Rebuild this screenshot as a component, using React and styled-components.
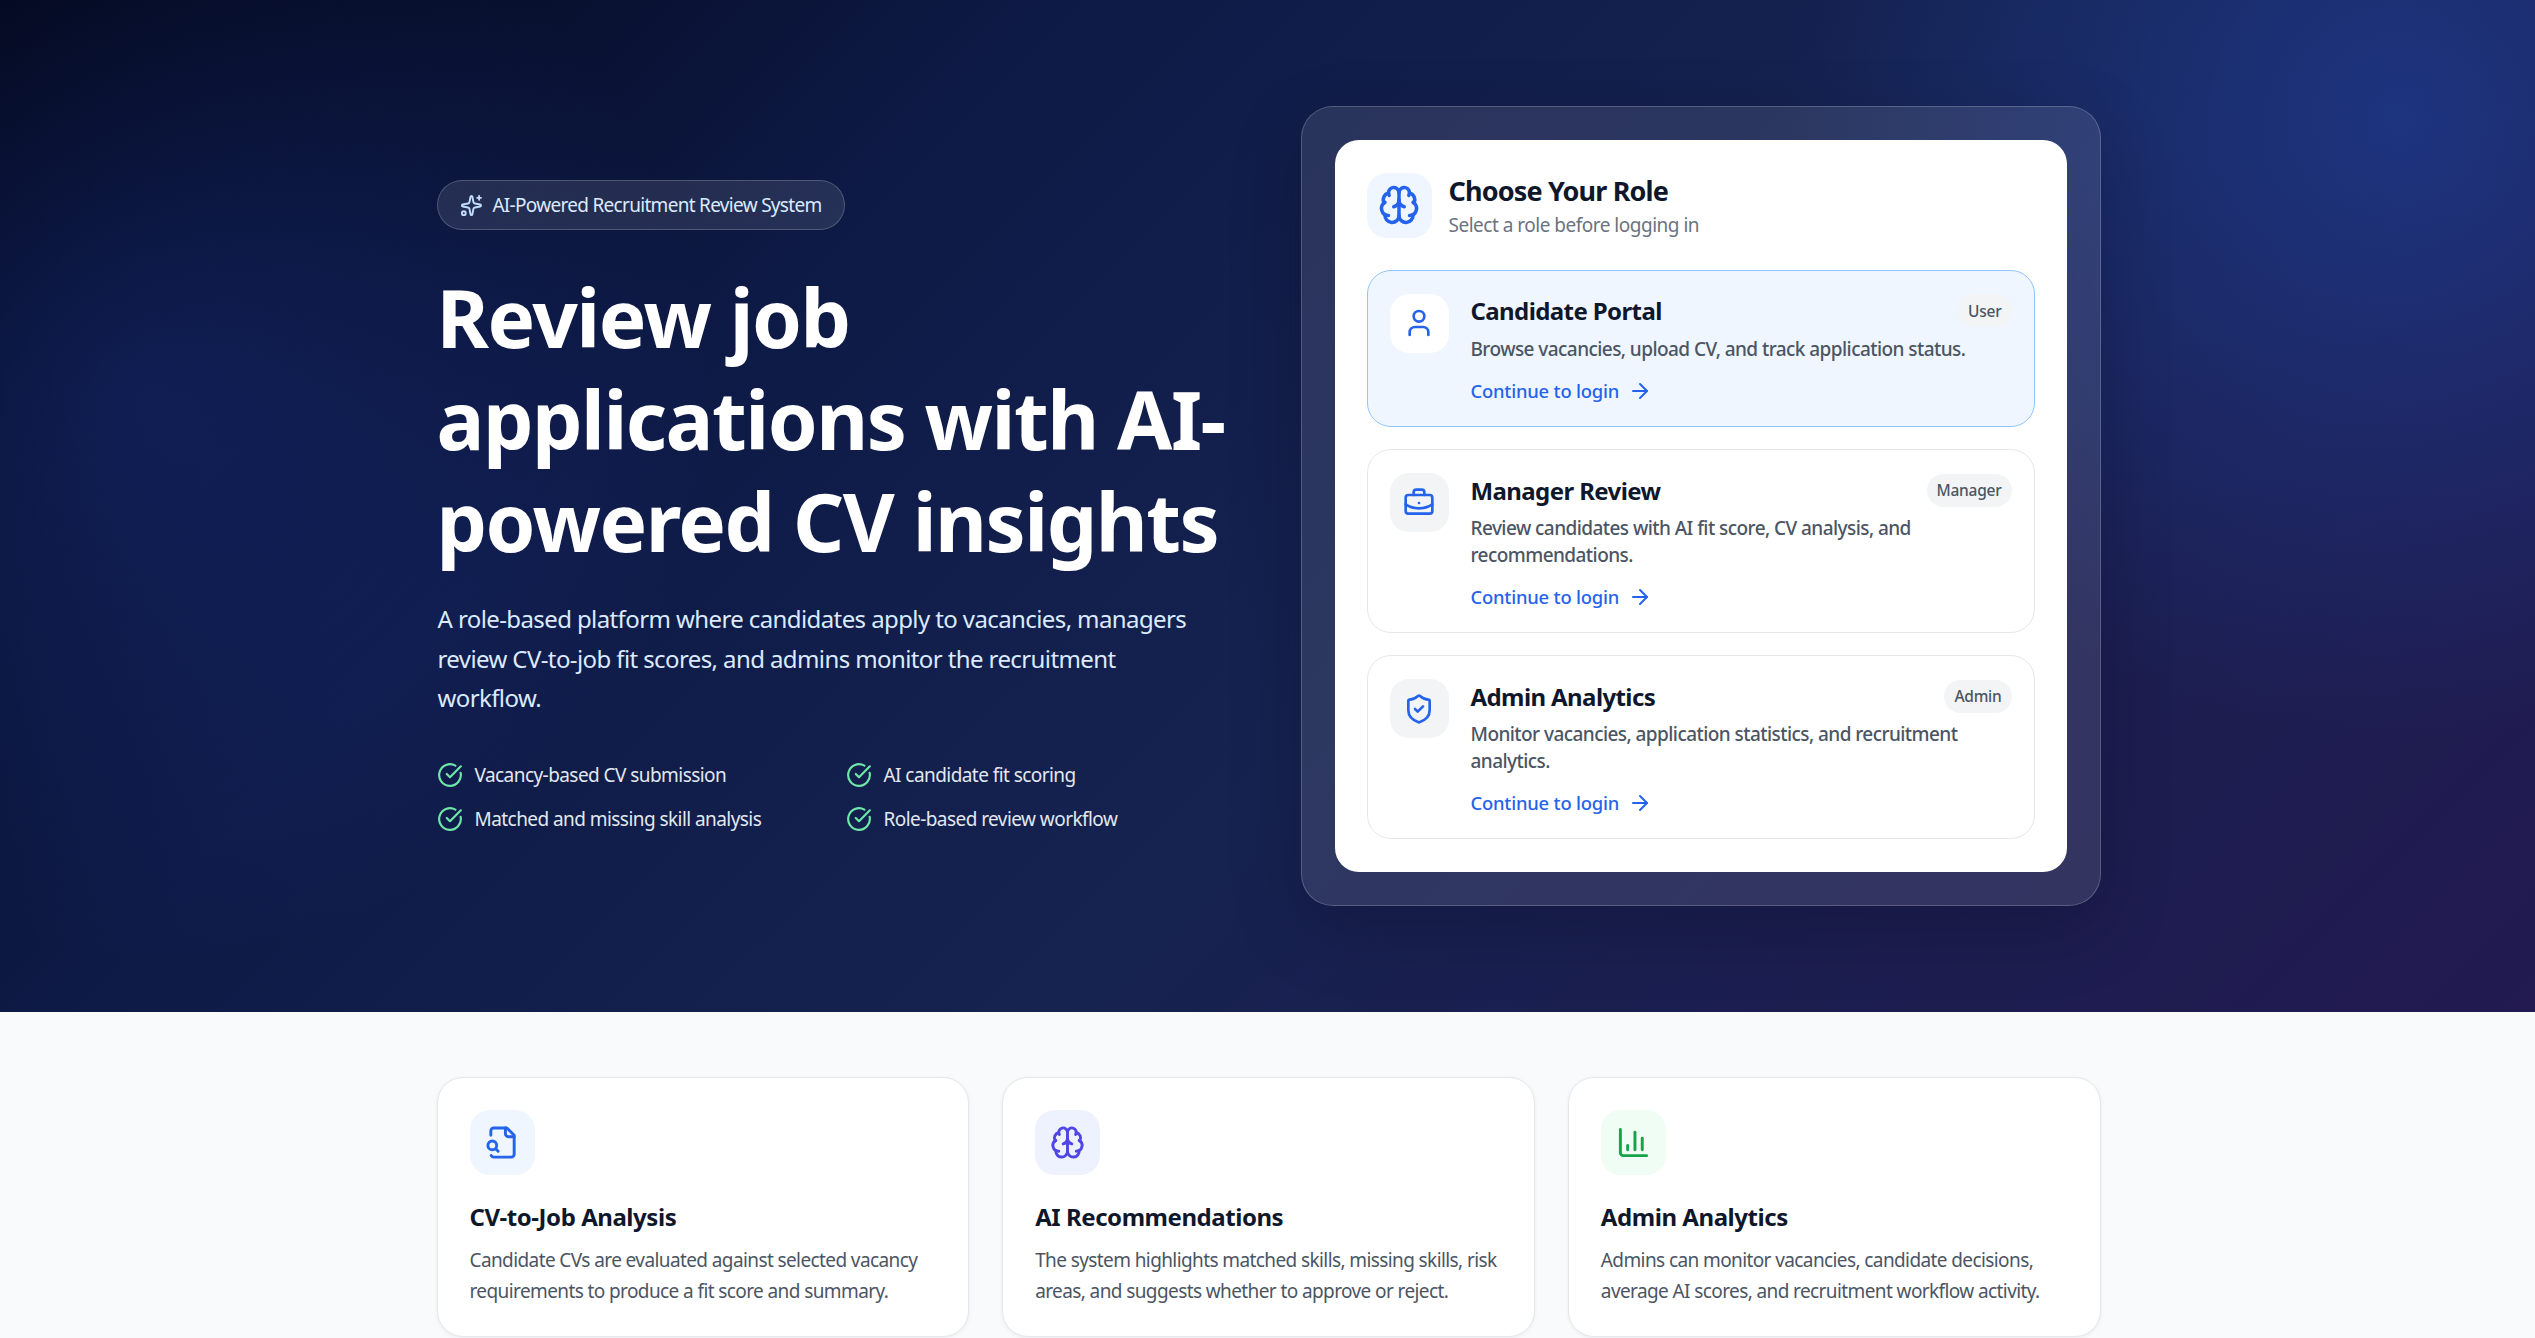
import React from 'react'
import styled, { createGlobalStyle } from 'styled-components'
import {
  ArrowRight,
  Brain,
  BriefcaseBusiness,
  ChartColumn,
  CircleCheckBig,
  ShieldCheck,
  Sparkles,
  User,
} from 'lucide-react'

const GlobalStyle = createGlobalStyle`
  html, body {
    margin: 0;
    height: 100%;
    overflow: hidden;
    background: #f8fafc;
    font-family: "Noto Sans", "Open Sans", sans-serif;
  }
  * { box-sizing: border-box; }
`

const Hero = styled.section`
  height: 1012px;
  display: flex;
  align-items: center;
  justify-content: center;
  padding-left: 2px;
  background:
    radial-gradient(circle at 2400px 120px, rgba(37, 99, 235, 0.3), transparent 620px),
    radial-gradient(circle at 150px 400px, rgba(37, 70, 190, 0.26), transparent 560px),
    linear-gradient(135deg, #020617 0%, #0e1a46 30%, #162250 58%, #221a50 100%);
`

const HeroGrid = styled.div`
  width: 1664px;
  display: grid;
  grid-template-columns: 800px 800px;
  column-gap: 64px;
  align-items: center;
`

const Intro = styled.div`
  display: flex;
  flex-direction: column;
  align-items: flex-start;
`

const Pill = styled.div`
  height: 50px;
  width: 408px;
  display: flex;
  align-items: center;
  gap: 10px;
  padding: 0 22px;
  border: 1px solid rgba(255, 255, 255, 0.2);
  border-radius: 25px;
  background: rgba(255, 255, 255, 0.1);
  color: #dbeafe;
  font-size: 19px;
  letter-spacing: -0.7px;
  white-space: nowrap;
`

const Headline = styled.h1`
  margin: 36px 0 0;
  color: #fff;
  font-size: 80px;
  line-height: 102px;
  font-weight: 700;
  letter-spacing: -1.5px;
`

const Lead = styled.p`
  margin: 27px 0 0 1px;
  width: 770px;
  color: #dbeafe;
  font-size: 24px;
  line-height: 39.5px;
  letter-spacing: -0.6px;
`

const Bullets = styled.ul`
  list-style: none;
  margin: 44px 0 0;
  padding: 0;
  display: grid;
  grid-template-columns: 409px 391px;
  row-gap: 18px;
`

const Bullet = styled.li`
  height: 26px;
  display: flex;
  align-items: center;
  gap: 12px;
  color: #e2e8f0;
  font-size: 19px;
  letter-spacing: -0.56px;
  white-space: nowrap;
  svg { color: #6ee7a8; }
`

const Panel = styled.div`
  padding: 33px;
  border: 1px solid rgba(255, 255, 255, 0.2);
  border-radius: 32px;
  background: rgba(255, 255, 255, 0.1);
  box-shadow: 0 24px 70px rgba(2, 6, 23, 0.22);
`

const RoleCard = styled.div`
  padding: 33px 32px;
  border-radius: 24px;
  background: #fff;
`

const RoleHeader = styled.div`
  display: flex;
  align-items: center;
  gap: 17px;
  margin-bottom: 32px;
`

const IconTile = styled.div`
  flex: none;
  width: ${p => p.$size}px;
  height: ${p => p.$size}px;
  display: flex;
  align-items: center;
  justify-content: center;
  border-radius: ${p => p.$radius}px;
  background: ${p => p.$bg};
  color: ${p => p.$fg};
`

const RoleHeading = styled.h2`
  margin: 2px 0 0;
  color: #0f172a;
  font-size: 27px;
  line-height: 31px;
  font-weight: 700;
  letter-spacing: -0.85px;
`

const RoleHint = styled.p`
  margin: 6px 0 0;
  color: #6b7280;
  font-size: 19px;
  line-height: 26px;
  letter-spacing: -0.5px;
`

const RoleList = styled.div`
  display: flex;
  flex-direction: column;
  gap: 22px;
`

const RoleRow = styled.div`
  display: flex;
  gap: 22px;
  padding: 23px 22px 21px;
  border: 1px solid ${p => (p.$active ? '#93c5fd' : '#e5e7eb')};
  border-radius: 24px;
  background: ${p => (p.$active ? '#eff6ff' : '#fff')};
`

const RoleBody = styled.div`
  flex: 1;
  min-width: 0;
`

const RoleTop = styled.div`
  display: flex;
  align-items: center;
  justify-content: space-between;
  height: 34px;
`

const RoleName = styled.h3`
  margin: 0;
  color: #0f172a;
  font-size: 24px;
  line-height: 33px;
  font-weight: 700;
  letter-spacing: -0.6px;
`

const Tag = styled.span`
  height: 33px;
  display: flex;
  align-items: center;
  padding: 0 10px;
  border-radius: 17px;
  background: #f3f4f6;
  color: #4b5563;
  font-size: 15.5px;
  font-weight: 500;
  letter-spacing: -0.25px;
`

const RoleText = styled.p`
  margin: 8px 0 0;
  color: #4b5563;
  font-size: 19px;
  line-height: 26.5px;
  font-weight: 500;
  letter-spacing: -0.56px;
`

const RoleLink = styled.div`
  display: flex;
  align-items: center;
  gap: 9px;
  margin-top: 15px;
  color: #2563eb;
  font-size: 18.4px;
  line-height: 28px;
  font-weight: 500;
  letter-spacing: -0.2px;
`

const Features = styled.section`
  display: flex;
  justify-content: center;
  padding: 65px 0 0 2px;
`

const FeatureGrid = styled.div`
  width: 1664px;
  display: grid;
  grid-template-columns: repeat(3, 1fr);
  gap: 33px;
`

const FeatureCard = styled.article`
  height: 260px;
  padding: 32px;
  border: 1px solid #e5e7eb;
  border-radius: 26px;
  background: #fff;
  box-shadow: 0 1px 4px rgba(15, 23, 42, 0.06);
`

const FeatureName = styled.h3`
  margin: 26px 0 0;
  color: #0f172a;
  font-size: 24px;
  line-height: 32px;
  font-weight: 700;
  letter-spacing: -0.45px;
`

const FeatureText = styled.p`
  margin: 12px 0 0;
  color: #4b5563;
  font-size: 19px;
  line-height: 31px;
  letter-spacing: -0.6px;
`

// file with the magnifier sitting on its lower left corner
const FileSearchIcon = ({ size }) => (
  <svg
    width={size}
    height={size}
    viewBox="0 0 24 24"
    fill="none"
    stroke="currentColor"
    strokeWidth="2"
    strokeLinecap="round"
    strokeLinejoin="round"
  >
    <path d="M14 2v4a2 2 0 0 0 2 2h4" />
    <path d="M4.268 21a2 2 0 0 0 1.727 1H18a2 2 0 0 0 2-2V7l-5-5H6a2 2 0 0 0-2 2v3" />
    <path d="m9 18-1.5-1.5" />
    <circle cx="5" cy="14" r="3" />
  </svg>
)

const bullets = [
  'Vacancy-based CV submission',
  'AI candidate fit scoring',
  'Matched and missing skill analysis',
  'Role-based review workflow',
]

const roles = [
  {
    name: 'Candidate Portal',
    tag: 'User',
    text: 'Browse vacancies, upload CV, and track application status.',
    icon: User,
    active: true,
  },
  {
    name: 'Manager Review',
    tag: 'Manager',
    text: 'Review candidates with AI fit score, CV analysis, and recommendations.',
    icon: BriefcaseBusiness,
  },
  {
    name: 'Admin Analytics',
    tag: 'Admin',
    text: 'Monitor vacancies, application statistics, and recruitment analytics.',
    icon: ShieldCheck,
  },
]

const features = [
  {
    name: 'CV-to-Job Analysis',
    text: 'Candidate CVs are evaluated against selected vacancy requirements to produce a fit score and summary.',
    icon: FileSearchIcon,
    bg: '#eff6ff',
    fg: '#2563eb',
  },
  {
    name: 'AI Recommendations',
    text: 'The system highlights matched skills, missing skills, risk areas, and suggests whether to approve or reject.',
    icon: Brain,
    bg: '#eef2ff',
    fg: '#4f46e5',
  },
  {
    name: 'Admin Analytics',
    text: 'Admins can monitor vacancies, candidate decisions, average AI scores, and recruitment workflow activity.',
    icon: ChartColumn,
    bg: '#f0fdf4',
    fg: '#16a34a',
  },
]

const App = () => (
  <>
    <GlobalStyle />
    <Hero>
      <HeroGrid>
        <Intro>
          <Pill>
            <Sparkles size={23} color="#bfdbfe" />
            AI-Powered Recruitment Review System
          </Pill>
          <Headline>
            Review job applications with AI-powered CV insights
          </Headline>
          <Lead>
            A role-based platform where candidates apply to vacancies, managers review CV-to-job fit
            scores, and admins monitor the recruitment workflow.
          </Lead>
          <Bullets>
            {bullets.map(item => (
              <Bullet key={item}>
                <CircleCheckBig size={26} />
                {item}
              </Bullet>
            ))}
          </Bullets>
        </Intro>
        <Panel>
          <RoleCard>
            <RoleHeader>
              <IconTile $size={65} $radius={20} $bg="#eff6ff" $fg="#2563eb">
                <Brain size={42} />
              </IconTile>
              <div>
                <RoleHeading>Choose Your Role</RoleHeading>
                <RoleHint>Select a role before logging in</RoleHint>
              </div>
            </RoleHeader>
            <RoleList>
              {roles.map(role => (
                <RoleRow key={role.name} $active={role.active}>
                  <IconTile
                    $size={59}
                    $radius={19}
                    $bg={role.active ? '#fff' : '#f3f4f6'}
                    $fg="#2563eb"
                  >
                    <role.icon size={32} />
                  </IconTile>
                  <RoleBody>
                    <RoleTop>
                      <RoleName>{role.name}</RoleName>
                      <Tag>{role.tag}</Tag>
                    </RoleTop>
                    <RoleText>{role.text}</RoleText>
                    <RoleLink>
                      Continue to login
                      <ArrowRight size={24} />
                    </RoleLink>
                  </RoleBody>
                </RoleRow>
              ))}
            </RoleList>
          </RoleCard>
        </Panel>
      </HeroGrid>
    </Hero>
    <Features>
      <FeatureGrid>
        {features.map(feature => (
          <FeatureCard key={feature.name}>
            <IconTile $size={65} $radius={20} $bg={feature.bg} $fg={feature.fg}>
              <feature.icon size={35} />
            </IconTile>
            <FeatureName>{feature.name}</FeatureName>
            <FeatureText>{feature.text}</FeatureText>
          </FeatureCard>
        ))}
      </FeatureGrid>
    </Features>
  </>
)

export default App
